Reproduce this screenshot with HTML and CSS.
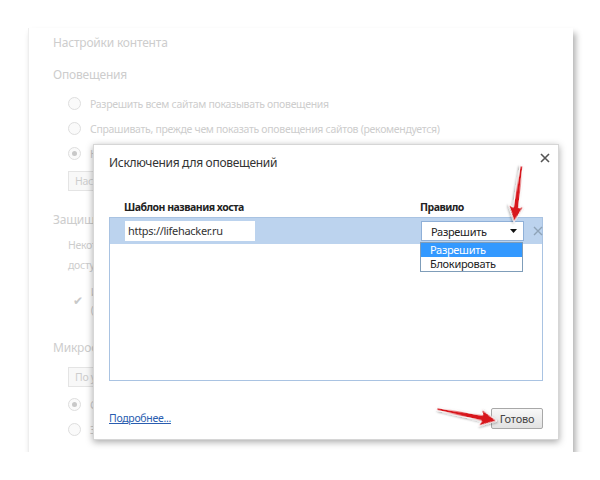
FILE: index.html
```html
<!DOCTYPE html>
<html lang="ru">
<head>
    <meta charset="UTF-8">
    <title>Исключения для оповещений</title>
    <link rel="stylesheet" href="styles.css">
</head>
<body>
    <div class="page">
        <div class="settings">
            <div class="title">Настройки контента</div>
            <div class="section">Оповещения</div>
            <div class="option"><span class="radio"></span>Разрешить всем сайтам показывать оповещения</div>
            <div class="option"><span class="radio"></span>Спрашивать, прежде чем показать оповещения сайтов (рекомендуется)</div>
            <div class="option"><span class="radio checked"></span>Не показывать оповещения</div>
            <div class="btn-row"><span class="faded-btn">Настроить исключения</span></div>

            <div class="section gap">Защищенный контент</div>
            <div class="para">Некоторые службы могут использовать идентификаторы<br>доступа к защищенному контенту.</div>
            <div class="check-row">
                <span class="check">&#10004;</span>
                <span>Использовать идентификаторы<br>(может потребоваться перезагрузка)</span>
            </div>

            <div class="section gap">Микрофон</div>
            <div class="btn-row small"><span class="faded-btn">По умолчанию</span></div>
            <div class="option"><span class="radio checked"></span>Спрашивать</div>
            <div class="option"><span class="radio"></span>Запретить</div>

            <!-- dialog over the settings page -->
            <div class="dialog">
                <svg class="dialog-close" width="10" height="10" viewBox="0 0 10 10">
                    <path d="M1 1 L9 9 M9 1 L1 9" stroke="#555" stroke-width="1.6"/>
                </svg>
                <div class="dialog-title">Исключения для оповещений</div>

                <div class="cols head">
                    <span>Шаблон названия хоста</span>
                    <span>Правило</span>
                </div>
                <div class="list">
                    <div class="cols row-selected">
                        <span class="host-input">https://lifehacker.ru</span>
                        <span class="rule-select">Разрешить
                            <svg class="caret" width="7" height="4" viewBox="0 0 7 4"><path d="M0 0 H7 L3.5 4 Z" fill="#111"/></svg>
                        </span>
                        <svg class="row-remove" width="10" height="10" viewBox="0 0 10 10">
                            <path d="M1 1 L9 9 M9 1 L1 9" stroke="#8fa3b8" stroke-width="1.4"/>
                        </svg>
                    </div>
                    <div class="dropdown">
                        <div class="dd-item active">Разрешить</div>
                        <div class="dd-item">Блокировать</div>
                    </div>
                </div>

                <div class="dialog-footer">
                    <a href="#" class="more-link">Подробнее...</a>
                    <button class="done-btn">Готово</button>
                </div>
            </div>
        </div>
    </div>

    <svg class="arrows" width="600" height="480" viewBox="0 0 600 480">
        <defs>
            <filter id="glow" x="-30%" y="-30%" width="160%" height="160%">
                <feDropShadow dx="1" dy="1" stdDeviation="1.2" flood-color="#000" flood-opacity="0.35"/>
            </filter>
        </defs>
        <g transform="translate(521.5 166) rotate(97.6)" filter="url(#glow)">
            <polygon points="0,-1.3 42,-2.8 40,-7.5 56.5,0 40,7.5 42,2.8 0,1.3" fill="#d8141c" stroke="#fff" stroke-width="1"/>
        </g>
        <g transform="translate(437 409) rotate(11.3)" filter="url(#glow)">
            <polygon points="0,-1.3 46,-3 44,-8.5 61,0 44,8.5 46,3 0,1.3" fill="#d8141c" stroke="#fff" stroke-width="1"/>
        </g>
    </svg>
</body>
</html>
```

FILE: styles.css
```css
body {
    margin: 0;
    background-color: #fff;
    font-family: "Noto Sans", "Open Sans", sans-serif;
}

.page {
    padding: 28px 0 0 28px;
    height: 452px;
    box-sizing: border-box;
}

/* faded settings page behind the dialog */
.settings {
    position: relative;
    width: 545px;
    height: 424px;
    box-sizing: border-box;
    padding: 5px 24px 0 24px;
    background-color: #fff;
    border-left: 1px solid #eee;
    box-shadow: 3px 5px 6px rgba(0, 0, 0, 0.3);
    color: #cdcdcd;
    font-size: 10.5px;
    letter-spacing: -0.3px;
    white-space: nowrap;
}

.title {
    font-size: 12px;
    letter-spacing: -0.2px;
    line-height: 20px;
}

.section {
    margin-top: 12px;
    font-size: 12px;
    letter-spacing: -0.2px;
    line-height: 20px;
}

.section.gap {
    margin-top: 19px;
}

.option {
    display: flex;
    align-items: center;
    height: 25px;
    padding-left: 15px;
}

.section + .option {
    margin-top: 6px;
}

.btn-row.small + .option {
    margin-top: 5px;
}

.radio {
    flex: none;
    width: 11px;
    height: 11px;
    border: 1px solid #dedede;
    border-radius: 50%;
    margin-right: 9px;
    position: relative;
    background: #fafafa;
}

.radio.checked::after {
    content: "";
    position: absolute;
    left: 3px;
    top: 3px;
    width: 5px;
    height: 5px;
    border-radius: 50%;
    background: #c8c8c8;
}

.btn-row {
    margin-top: 5px;
    padding-left: 15px;
    height: 20px;
}

.btn-row.small {
    margin-top: 9px;
}

.faded-btn {
    display: inline-block;
    height: 18px;
    line-height: 18px;
    padding: 0 6px;
    border: 1px solid #e4e4e4;
    background: #f8f8f8;
}

.para {
    margin-top: 5px;
    padding-left: 15px;
    line-height: 20px;
}

.check-row {
    display: flex;
    align-items: center;
    margin-top: 8px;
    padding-left: 20px;
    line-height: 18px;
}

.check {
    font-size: 12px;
    color: #c8c8c8;
    margin-right: 8px;
}

/* dialog */
.dialog {
    position: absolute;
    left: 64px;
    top: 116px;
    width: 466px;
    height: 296px;
    box-sizing: border-box;
    background-color: #fff;
    border: 1px solid #d6d6d6;
    box-shadow: 0 2px 7px rgba(0, 0, 0, 0.35);
    padding: 9px 15px 0 15px;
    color: #222;
    letter-spacing: -0.3px;
    white-space: nowrap;
}

.dialog-close {
    position: absolute;
    right: 8px;
    top: 8px;
}

.dialog-title {
    font-size: 12px;
    line-height: 18px;
    color: #333;
}

.cols {
    display: grid;
    grid-template-columns: 296px 103px 1fr;
    align-items: center;
    padding-left: 15px;
}

.head {
    margin-top: 27px;
    font-size: 10.5px;
    font-weight: bold;
    letter-spacing: -0.5px;
    line-height: 16px;
    color: #222;
}

.list {
    position: relative;
    margin-top: 2px;
    height: 164px;
    box-sizing: border-box;
    border: 1px solid #a9c3e2;
}

.row-selected {
    height: 26px;
    background-color: #bcd3ee;
    font-size: 11px;
}

.host-input {
    width: 130px;
    height: 20px;
    line-height: 20px;
    box-sizing: border-box;
    padding-left: 3px;
    background: #fff;
    color: #333;
}

.rule-select {
    display: flex;
    justify-content: space-between;
    align-items: center;
    height: 20px;
    box-sizing: border-box;
    padding: 0 6px 0 9px;
    background: #fff;
    border: 1px solid #8fb0d8;
    color: #222;
}

.row-remove {
    margin-left: 9px;
}

.dropdown {
    position: absolute;
    left: 310px;
    top: 24px;
    width: 103px;
    box-sizing: border-box;
    border: 1px solid #7f9db9;
    background: #fff;
    font-size: 11px;
}

.dd-item {
    height: 14px;
    line-height: 14px;
    padding-left: 9px;
    color: #222;
}

.dd-item.active {
    background-color: #3399ff;
    color: #fff;
}

.dialog-footer {
    display: flex;
    justify-content: space-between;
    align-items: center;
    margin-top: 27px;
    height: 20px;
}

.more-link {
    font-size: 10.5px;
    color: #2a5db0;
    text-decoration: underline;
}

.done-btn {
    width: 52px;
    height: 21px;
    padding: 0;
    border: 1px solid #a8a8a8;
    border-radius: 2px;
    background: linear-gradient(#f8f8f8, #e2e2e2);
    font-family: "Noto Sans", sans-serif;
    font-size: 11px;
    letter-spacing: -0.2px;
    color: #444;
}

.arrows {
    position: absolute;
    left: 0;
    top: 0;
    pointer-events: none;
}
```
